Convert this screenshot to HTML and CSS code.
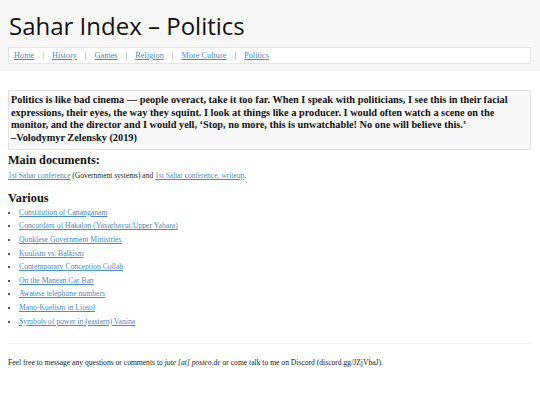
FILE: index.html
```html
<!DOCTYPE html>
<html>
<head>
<meta charset="utf-8">
<link rel="stylesheet" href="styles.css">
</head>
<body>
<header class="site-header">
  <h1 class="title">Sahar Index – Politics</h1>
  <nav class="nav">
    <a href="#">Home</a><span class="sep">|</span>
    <a href="#">History</a><span class="sep">|</span>
    <a href="#">Games</a><span class="sep">|</span>
    <a href="#">Religion</a><span class="sep">|</span>
    <a href="#">More Culture</a><span class="sep">|</span>
    <a href="#">Politics</a>
  </nav>
</header>
<main class="content">
  <blockquote class="quote">Politics is like bad cinema — people overact, take it too far. When I speak with politicians, I see this in their facial expressions, their eyes, the way they squint. I look at things like a producer. I would often watch a scene on the monitor, and the director and I would yell, ‘Stop, no more, this is unwatchable! No one will believe this.’<br>–Volodymyr Zelensky (2019)</blockquote>
  <h2 class="heading">Main documents:</h2>
  <p class="text"><a href="#">1st Sahar conference</a> (Government systems) and <a href="#">1st Sahar conference, writeup</a>.</p>
  <h2 class="heading various">Various</h2>
  <ul class="list">
    <li><a href="#">Constitution of Cananganam</a></li>
    <li><a href="#">Concordant of Hakalon (Yaxarhayut/Upper Yahara)</a></li>
    <li><a href="#">Qonklese Government Ministries</a></li>
    <li><a href="#">Kuulism vs. Balkism</a></li>
    <li><a href="#">Contemporary Conception Collab</a></li>
    <li><a href="#">On the Manean Car Ban</a></li>
    <li><a href="#">Awatese telephone numbers</a></li>
    <li><a href="#">Mano-Kuelism in Liosol</a></li>
    <li><a href="#">Symbols of power in (eastern) Vanina</a></li>
  </ul>
  <hr class="rule">
  <p class="text footer-text">Feel free to message any questions or comments to <em>jute [at] posteo.de</em> or come talk to me on Discord (discord.gg/JZjVbaJ).</p>
</main>
</body>
</html>
```
FILE: styles.css
```css
html, body {
  margin: 0;
  padding: 0;
  background: #fff;
}
body {
  font-family: "Liberation Serif", "Times New Roman", serif;
  color: #222;
  font-size: 7.5px;
}
.site-header {
  background: #f7f7f7;
  padding: 9px 9px 8px 8px;
  height: 54px;
}
.title {
  font-family: "Open Sans", sans-serif;
  font-weight: 400;
  font-size: 24px;
  line-height: 34px;
  margin: 0 0 4px 1px;
  color: #111;
}
.nav {
  background: #fff;
  border: 1px solid #e6e6e6;
  height: 15px;
  display: flex;
  align-items: center;
  padding: 0 5px;
  font-size: 8.3px;
}
.nav a {
  color: #4a8bc2;
}
.sep {
  color: #777;
  margin: 0 8px;
}
a {
  color: #4a8bc2;
}
.content {
  padding: 0 9px 0 8px;
}
.quote {
  margin: 19px 0 0;
  background: #f8f8f8;
  border: 1px solid #e3e3e3;
  padding: 3px 4px 4px 2px;
  font-size: 10.3px;
  font-weight: 700;
  line-height: 12.7px;
  color: #111;
}
.heading {
  font-size: 12.3px;
  line-height: 14px;
  font-weight: 700;
  margin: 3px 0 4px;
  color: #111;
}
.various {
  margin: 10px 0 1px;
}
.text {
  margin: 0;
  line-height: 10px;
}
.list {
  margin: 0;
  padding-left: 11px;
  font-size: 7.7px;
}
.list li {
  line-height: 13.6px;
}
.rule {
  border: 0;
  border-top: 1px solid #f0f0f0;
  margin: 15px 0 14px;
}
.footer-text {
  font-size: 7.6px;
}
```
